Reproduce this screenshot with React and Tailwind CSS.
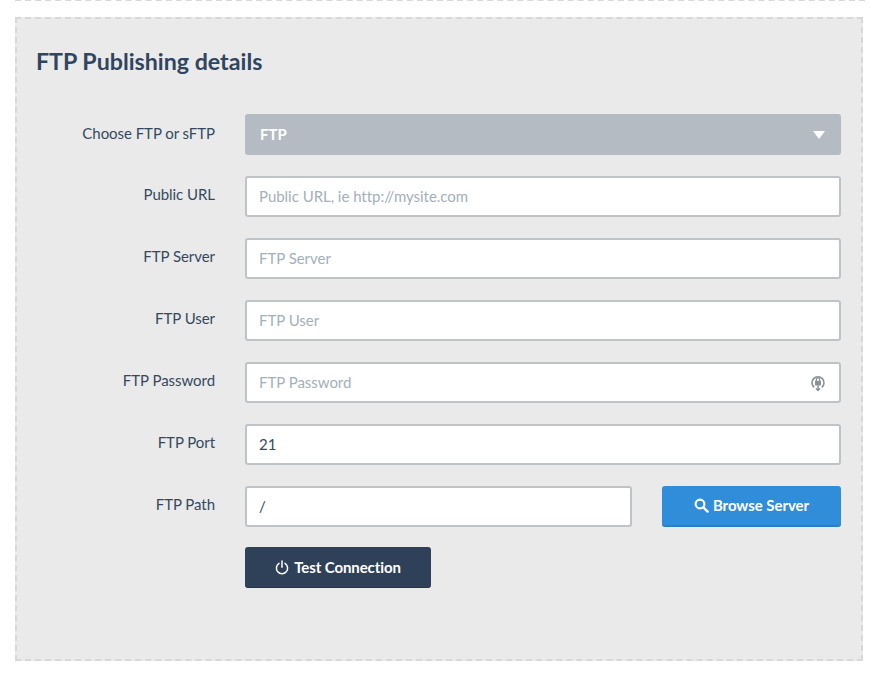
import React from "react";

function Label({ children, first }) {
  return (
    <div
      className={
        "w-[198px] shrink-0 text-right text-[15px] leading-[22px] tracking-[-0.05px] text-[#34495e] " +
        (first ? "pt-[8px]" : "pt-[7px]")
      }
    >
      {children}
    </div>
  );
}

function Field({ placeholder, value, icon, className = "" }) {
  return (
    <div
      className={
        "flex h-[41px] items-center rounded-[3px] border-2 border-[#bdc3c7] bg-white pl-[12px] pr-[12px] text-[15px] tracking-[-0.03px] " +
        className
      }
    >
      <span className={value ? "flex-1 text-[#34495e]" : "flex-1 text-[#a4afba]"}>{value || placeholder}</span>
      {icon}
    </div>
  );
}

function Row({ label, first, children }) {
  return (
    <div className="flex h-[41px] items-start">
      <Label first={first}>{label}</Label>
      <div className="ml-[30px] flex w-[596px] shrink-0 items-start">{children}</div>
    </div>
  );
}

function KeyIcon() {
  return (
    <svg width="16" height="18" viewBox="0 0 16 18" className="mr-[1px] shrink-0">
      <path d="M4.2 13.4A6 6 0 1 1 11.8 13.4" fill="none" stroke="#8a9095" strokeWidth="1.6" />
      <rect x="5" y="6.8" width="6" height="4.8" rx="0.8" fill="#8a9095" />
      <path d="M6.3 7V5.6a1.7 1.7 0 0 1 3.4 0V7" fill="none" stroke="#8a9095" strokeWidth="1.2" />
      <path d="M8 11.5V16M6 14.5l2 2 2-2" fill="none" stroke="#8a9095" strokeWidth="1.5" />
    </svg>
  );
}

function SearchIcon() {
  return (
    <svg width="15" height="15" viewBox="0 0 15 15" className="shrink-0">
      <circle cx="6" cy="6" r="4.4" fill="none" stroke="white" strokeWidth="2.1" />
      <path d="M9.4 9.4L13.6 13.6" fill="none" stroke="white" strokeWidth="2.4" strokeLinecap="round" />
    </svg>
  );
}

function PowerIcon() {
  return (
    <svg width="14" height="15" viewBox="0 0 14 15" className="shrink-0">
      <path d="M4 3.4A5.6 5.6 0 1 0 10 3.4" fill="none" stroke="white" strokeWidth="1.5" strokeLinecap="round" />
      <path d="M7 1V7.2" fill="none" stroke="white" strokeWidth="1.5" strokeLinecap="round" />
    </svg>
  );
}

export default function App() {
  return (
    <div className="h-[680px] w-[880px] overflow-hidden bg-white font-['Lato','Open_Sans',sans-serif]">
      <div className="mx-[15px] h-[2px] -translate-y-[1px] border-t-2 border-dashed border-[#d8d8d8]" />
      <div className="mx-[15px] mt-[15px] box-border h-[644px] w-[848px] border-2 border-dashed border-[#d8d8d8] bg-[#eaeaea]">
        <h2 className="mt-[26px] pl-[19px] text-[23.2px] font-bold leading-[32px] text-[#2f4560]">
          FTP Publishing details
        </h2>
        <div className="mt-[37px] flex flex-col gap-[21px]">
          <Row first label="Choose FTP or sFTP">
            <div className="flex h-[41px] w-full items-center justify-between rounded-[3px] bg-[#b5bbc2] pl-[15px] pr-[16px] text-[15px] font-bold text-white">
              <span>FTP</span>
              <span className="h-0 w-0 border-x-[6px] border-t-[8px] border-x-transparent border-t-white" />
            </div>
          </Row>
          <Row label="Public URL">
            <Field className="w-full" placeholder="Public URL, ie http://mysite.com" />
          </Row>
          <Row label="FTP Server">
            <Field className="w-full" placeholder="FTP Server" />
          </Row>
          <Row label="FTP User">
            <Field className="w-full" placeholder="FTP User" />
          </Row>
          <Row label="FTP Password">
            <Field className="w-full" placeholder="FTP Password" icon={<KeyIcon />} />
          </Row>
          <Row label="FTP Port">
            <Field className="w-full" value="21" />
          </Row>
          <Row label="FTP Path">
            <Field className="w-[387px]" value="/" />
            <div className="ml-[30px] flex h-[41px] w-[179px] items-center justify-center gap-[4px] rounded-[3px] border-b-2 border-[#2a7fc4] bg-[#2f8dd9] text-[15px] font-bold tracking-[-0.05px] text-white">
              <SearchIcon />
              <span>Browse Server</span>
            </div>
          </Row>
        </div>
        <div className="ml-[228px] mt-[20px] flex h-[41px] w-[186px] items-center justify-center gap-[5px] rounded-[3px] border-b border-[#25364a] bg-[#2f4158] text-[15px] font-bold tracking-[-0.1px] text-white">
          <PowerIcon />
          <span>Test Connection</span>
        </div>
      </div>
    </div>
  );
}
